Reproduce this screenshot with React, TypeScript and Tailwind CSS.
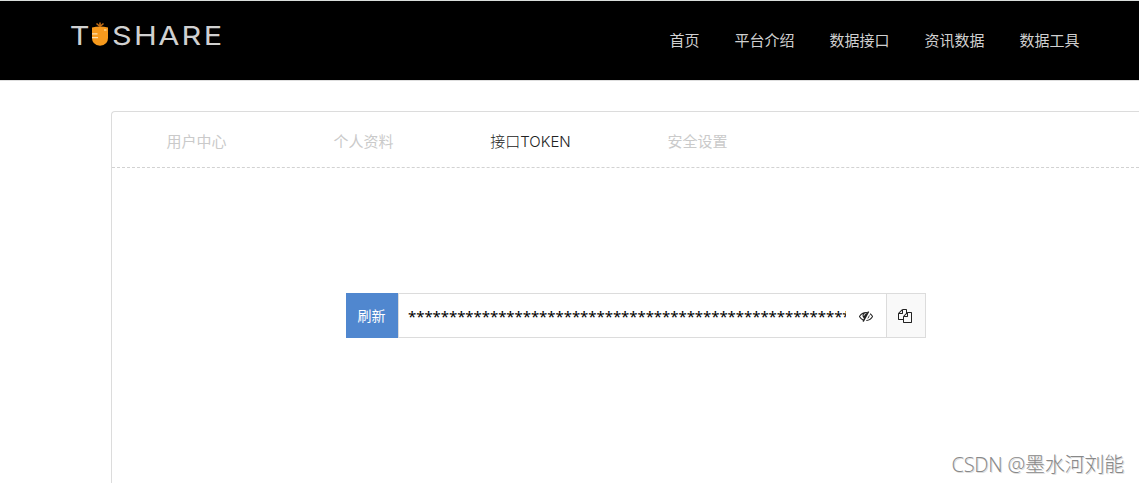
import { useState } from "react";

const NAV_ITEMS = ["首页", "平台介绍", "数据接口", "资讯数据", "数据工具"];
const TABS = ["用户中心", "个人资料", "接口TOKEN", "安全设置"];
const MASKED_TOKEN = "*".repeat(56);

function Logo() {
  return (
    <svg width="156" height="32" viewBox="0 0 156 32" className="overflow-visible font-['Inter'] text-[26px] font-normal" fill="#d0d0d0">
      <g transform="scale(1.18 1)">
        <text x="-0.3" y="26.2">T</text>
        <text x="35.700 54.200 74.700 94.400 113.300" y="26.2">SHARE</text>
      </g>
      <path d="M22 8.500Q30 6.500 38 8.500V19Q38 26 30 26.800Q22 26 22 19Z" fill="#f79a1d" />
      <path d="M30 7.500L26.500 4.500M30 7.500V3.500M30 7.500L33.500 4.500" stroke="#c26d16" strokeWidth="1.600" />
      <path d="M22 14.800h5.500M22 18.600h6" stroke="#ffe0ae" strokeWidth="1.300" />
      <path d="M34 11h2.500" stroke="#ffd08a" strokeWidth="1.500" />
    </svg>
  );
}

function EyeSlashIcon() {
  return (
    <svg width="14" height="14" viewBox="0 0 1792 1792" fill="currentColor">
      <path d="M555 1335l78-141q-87-63-136-159t-49-203q0-121 61-225-229 117-381 353 167 258 427 375zm389-759q0-20-14-34t-34-14q-125 0-214.500 89.500t-89.500 214.500q0 20 14 34t34 14 34-14 14-34q0-86 61-147t147-61q20 0 34-14t14-34zm363-191q0 7-1 9-106 189-316 567t-315 566l-49 89q-10 16-28 16-12 0-134-70-16-10-16-28 0-12 44-87-143-65-263.500-173t-208.500-245q-20-31-20-69t20-69q153-235 380-371t496-136q89 0 180 17l54-97q10-16 28-16 5 0 18 6t31 15.500 33 18.500 31.500 18.500 19.500 11.500q16 10 16 27zm37 447q0 139-79 253.500t-209 164.500l280-502q8 45 8 84zm448 128q0 35-20 69-39 64-109 145-150 172-347.500 267t-419.500 95l74-132q212-18 392.500-137t301.500-307q-115-179-282-294l63-112q95 64 182.500 153t144.500 184q20 34 20 69z" />
    </svg>
  );
}

function FilesIcon() {
  return (
    <svg width="14" height="14" viewBox="0 0 1792 1792" fill="currentColor">
      <path d="M1696 384q40 0 68 28t28 68v1216q0 40-28 68t-68 28h-960q-40 0-68-28t-28-68v-288h-544q-40 0-68-28t-28-68v-672q0-40 20-88t48-76l408-408q28-28 76-48t88-20h416q40 0 68 28t28 68v328q68-40 128-40h416zm-544 213l-299 299h299v-299zm-640-384l-299 299h299v-299zm196 647l316-316v-416h-384v416q0 40-28 68t-68 28h-416v640h512v-256q0-40 20-88t48-76zm956 804v-1152h-384v416q0 40-28 68t-68 28h-416v640h896z" />
    </svg>
  );
}

export default function App() {
  const [active, setActive] = useState("接口TOKEN");

  return (
    <div className="relative h-[483px] overflow-hidden bg-white font-['Open_Sans','Noto_Sans_CJK_SC',sans-serif] text-[15px]">
      {/* Top bar */}
      <header className="flex h-[81px] items-start justify-between border-t border-b border-t-[#d9dddb] border-b-[#dedede] bg-black pr-[59.5px] pl-[70px]">
        <div className="pt-[18px]">
          <Logo />
        </div>
        <nav className="flex gap-[35px] pt-[27px] leading-6 text-[#d0d0d0]">
          {NAV_ITEMS.map((item) => (
            <a key={item} href="#" className="whitespace-nowrap">{item}</a>
          ))}
        </nav>
      </header>

      {/* Account panel */}
      <main className="mt-[30px] ml-[111px] h-[380px] rounded-tl border-t border-l border-[#dcdcdc]">
        <div className="flex h-14 border-b border-dashed border-[#d2d2d2] pl-px">
          {TABS.map((tab) => (
            <button
              key={tab}
              onClick={() => setActive(tab)}
              className={`w-[167px] text-center ${tab === active ? "pt-[5px] font-['Inter','Noto_Sans_CJK_SC'] font-light text-[#222]" : "pt-[3px] text-[#cacaca]"}`}
            >
              {tab}
            </button>
          ))}
        </div>

        {/* Token field */}
        <div className="mt-[125px] ml-[234px] flex h-[45px] w-[580px]">
          <button className="w-[52px] bg-[#5087cf] pr-px text-sm text-white">刷新</button>
          <div className="flex flex-1 items-center border border-[#dcdcdc] pr-[13px] pl-[9px] text-[#222]">
            <span className="w-[438px] overflow-hidden pt-[2px] font-['Noto_Sans'] tracking-[-0.07px] whitespace-nowrap text-black">
              {MASKED_TOKEN}
            </span>
            <span className="ml-auto pt-px">
              <EyeSlashIcon />
            </span>
          </div>
          <button className="flex w-[39px] items-center justify-center border-y border-r border-[#dcdcdc] bg-[#f9f9f9] pr-[2px] text-[#222]">
            <FilesIcon />
          </button>
        </div>
      </main>

      <div className="absolute top-[451px] right-[15px] text-[20px] leading-7 font-light tracking-[-0.2px] whitespace-nowrap text-[#888] [text-shadow:1px_1px_0_#ddd]">
        CSDN @墨水河刘能
      </div>
    </div>
  );
}
